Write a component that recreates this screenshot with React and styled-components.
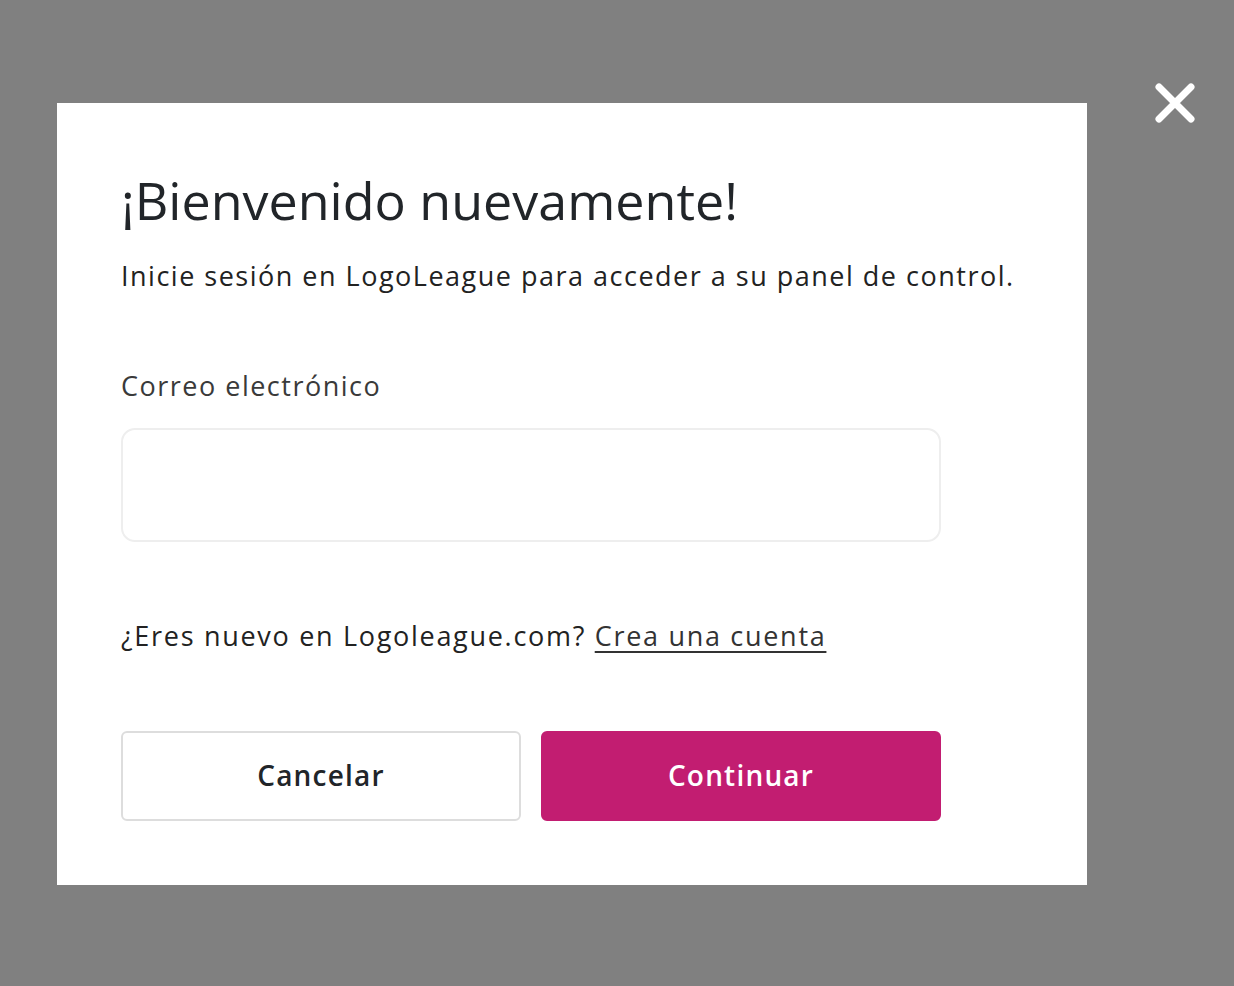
import React from 'react';
import styled, { createGlobalStyle } from 'styled-components';

const GlobalStyle = createGlobalStyle`
  html, body {
    margin: 0;
    padding: 0;
    background: #808080;
  }
  body {
    font-family: "Open Sans", "Noto Sans", sans-serif;
  }
  * {
    box-sizing: border-box;
  }
`;

const Overlay = styled.div`
  position: relative;
  width: 1234px;
  height: 986px;
  background: #808080;
  padding: 103px 0 0 57px;
`;

const CloseButton = styled.button`
  position: absolute;
  top: 80px;
  left: 1152px;
  width: 46px;
  height: 46px;
  padding: 0;
  border: none;
  background: transparent;
  cursor: pointer;
  display: flex;
  align-items: center;
  justify-content: center;
`;

const Modal = styled.div`
  width: 1030px;
  height: 782px;
  background: #fff;
  padding: 69px 64px 64px;
`;

const Title = styled.h1`
  margin: 0;
  font-size: 52px;
  line-height: 56px;
  font-weight: 400;
  color: #212529;
`;

const Subtitle = styled.p`
  margin: 30px 0 0;
  font-size: 27px;
  line-height: 36px;
  letter-spacing: 1.5px;
  color: #222;
`;

const Form = styled.form`
  width: 820px;
  margin-top: 74px;
  display: flex;
  flex-direction: column;
`;

const Label = styled.label`
  font-size: 27px;
  line-height: 36px;
  letter-spacing: 1.5px;
  color: #3a3a3a;
`;

const Input = styled.input`
  margin-top: 24px;
  height: 114px;
  width: 100%;
  border: 2px solid #eeeeee;
  border-radius: 14px;
  padding: 0 24px;
  font: inherit;
  font-size: 26px;
  outline: none;
`;

const SignupText = styled.p`
  margin: 76px 0 0;
  font-size: 27px;
  line-height: 36px;
  letter-spacing: 1.7px;
  color: #222;
`;

const SignupLink = styled.a`
  color: #333;
  text-decoration: underline;
  text-underline-offset: 5px;
  text-decoration-thickness: 2px;
`;

const Actions = styled.div`
  margin-top: 77px;
  display: grid;
  grid-template-columns: 1fr 1fr;
  gap: 20px;
`;

const ActionButton = styled.button`
  height: 90px;
  padding: 0 0 3px;
  border-radius: 6px;
  font-family: inherit;
  font-size: 28px;
  font-weight: 600;
  letter-spacing: 1.2px;
  cursor: pointer;
  border: 2px solid ${p => (p.$primary ? '#c21d71' : '#dddddd')};
  background: ${p => (p.$primary ? '#c21d71' : '#fff')};
  color: ${p => (p.$primary ? '#fff' : '#212529')};
`;

const CloseIcon = () => (
  <svg width="46" height="46" viewBox="0 0 46 46">
    <path
      d="M7 7 L39 39 M39 7 L7 39"
      stroke="#fff"
      strokeWidth="7"
      strokeLinecap="round"
    />
  </svg>
);

export default function App() {
  return (
    <>
      <GlobalStyle />
      <Overlay>
        <Modal>
          <Title>¡Bienvenido nuevamente!</Title>
          <Subtitle>Inicie sesión en LogoLeague para acceder a su panel de control.</Subtitle>
          <Form onSubmit={e => e.preventDefault()}>
            <Label htmlFor="email">Correo electrónico</Label>
            <Input id="email" type="email" />
            <SignupText>
              ¿Eres nuevo en Logoleague.com? <SignupLink href="#">Crea una cuenta</SignupLink>
            </SignupText>
            <Actions>
              <ActionButton type="button">Cancelar</ActionButton>
              <ActionButton type="submit" $primary>Continuar</ActionButton>
            </Actions>
          </Form>
        </Modal>
        <CloseButton aria-label="Cerrar">
          <CloseIcon />
        </CloseButton>
      </Overlay>
    </>
  );
}
